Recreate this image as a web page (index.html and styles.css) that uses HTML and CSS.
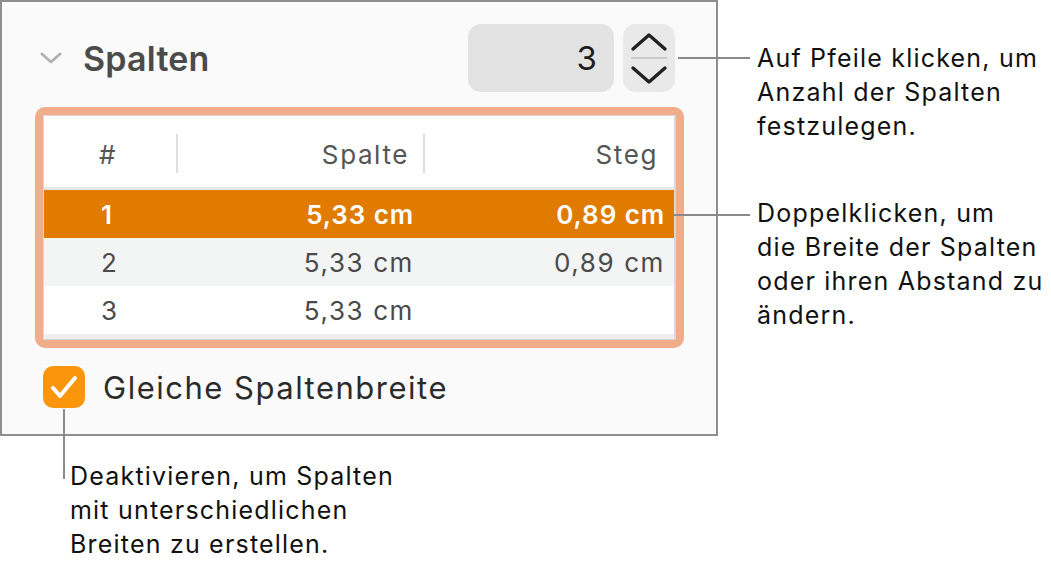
FILE: index.html
```html
<!DOCTYPE html>
<html lang="de">
<head>
<meta charset="UTF-8">
<title>Spalten</title>
<link rel="stylesheet" href="styles.css">
</head>
<body>
<div class="page">
	<section class="panel">
		<div class="panel-head">
			<svg class="disclosure" width="22" height="14" viewBox="0 0 22 14"><polyline points="2,3 11,11 20,3" fill="none" stroke="#b3b3b3" stroke-width="3" stroke-linecap="round" stroke-linejoin="round"/></svg>
			<h2 class="title">Spalten</h2>
			<div class="stepper">
				<div class="stepper-field">3</div>
				<div class="stepper-buttons">
					<svg width="52" height="68" viewBox="0 0 52 68">
						<polyline points="10,25 26,11 42,25" fill="none" stroke="#222" stroke-width="3.4" stroke-linecap="round" stroke-linejoin="round"/>
						<line x1="8" y1="34" x2="44" y2="34" stroke="#cbcbcb" stroke-width="2"/>
						<polyline points="10,44 26,58 42,44" fill="none" stroke="#222" stroke-width="3.4" stroke-linecap="round" stroke-linejoin="round"/>
					</svg>
				</div>
			</div>
		</div>

		<div class="table-frame">
			<div class="col-table">
				<div class="row row-head">
					<span class="cell c-num">#</span>
					<span class="cell c-width">Spalte</span>
					<span class="cell c-gap">Steg</span>
				</div>
				<div class="row row-selected">
					<span class="cell c-num">1</span>
					<span class="cell c-width">5,33 cm</span>
					<span class="cell c-gap">0,89 cm</span>
				</div>
				<div class="row row-alt">
					<span class="cell c-num">2</span>
					<span class="cell c-width">5,33 cm</span>
					<span class="cell c-gap">0,89 cm</span>
				</div>
				<div class="row">
					<span class="cell c-num">3</span>
					<span class="cell c-width">5,33 cm</span>
					<span class="cell c-gap"></span>
				</div>
				<div class="table-foot"></div>
			</div>
		</div>

		<label class="check-row">
			<span class="checkbox">
				<svg width="42" height="42" viewBox="0 0 42 42"><polyline points="10,22 17,30 32,12" fill="none" stroke="#fff" stroke-width="4" stroke-linecap="round" stroke-linejoin="round"/></svg>
			</span>
			<span class="check-label">Gleiche Spaltenbreite</span>
		</label>
	</section>

	<div class="notes">
		<p class="note note-stepper">Auf Pfeile klicken, um<br>Anzahl der Spalten<br>festzulegen.</p>
		<p class="note note-table">Doppelklicken, um<br>die Breite der Spalten<br>oder ihren Abstand zu<br>ändern.</p>
	</div>

	<p class="note note-check">Deaktivieren, um Spalten<br>mit unterschiedlichen<br>Breiten zu erstellen.</p>
</div>
</body>
</html>
```

FILE: styles.css
```css
/* reset */
*{
	margin: 0;
	padding: 0;
	box-sizing: border-box;
}
body{
	background: #fff;
	font-family: Inter, "Noto Sans", "Liberation Sans", sans-serif;
	color: #111;
}
.page{
	width: 1051px;
	height: 564px;
	display: grid;
	grid-template-columns: 718px 1fr;
	grid-template-rows: 436px 1fr;
}

/* inspector panel */
.panel{
	grid-column: 1;
	grid-row: 1;
	background: #fafafa;
	border: 2px solid #8e8e8e;
	padding: 22px 32px 0 33px;
}
.panel-head{
	height: 68px;
	display: flex;
	align-items: center;
}
.disclosure{
	margin-left: 5px;
}
.title{
	margin-left: 21px;
	font-size: 34px;
	font-weight: 600;
	color: #4b4b4b;
	letter-spacing: 0.2px;
}
.stepper{
	margin-left: auto;
	margin-right: 9px;
	display: flex;
	gap: 9px;
}
.stepper-field{
	width: 146px;
	height: 68px;
	border-radius: 13px;
	background: #e3e3e3;
	font-size: 33px;
	color: #1e1e1e;
	display: flex;
	align-items: center;
	justify-content: flex-end;
	padding-right: 17px;
}
.stepper-buttons{
	width: 52px;
	height: 68px;
	border-radius: 13px;
	background: #e9e9e9;
}
.stepper-buttons svg{
	display: block;
}

/* column table */
.table-frame{
	margin-top: 15px;
	border: 8px solid #f1ad8b;
	border-radius: 10px;
}
.col-table{
	background: #fff;
	border: 1px solid #d8d8d8;
	border-right-width: 2px;
	font-size: 26px;
	letter-spacing: 1.6px;
	color: #4a4a4a;
}
.row{
	display: grid;
	grid-template-columns: 132px 247px 1fr;
	height: 48px;
}
.cell{
	display: flex;
	align-items: center;
	justify-content: flex-end;
	padding-right: 9px;
}
.cell.c-num{
	justify-content: flex-start;
	padding-left: 57px;
}
.row-head{
	height: 74px;
	border-bottom: 3px solid #e6e6e6;
	color: #555;
}
.row-head .cell{
	position: relative;
	padding-top: 6px;
	padding-right: 14px;
}
.row-head .c-gap{
	padding-right: 16px;
}
.row-head .c-width::before,
.row-head .c-gap::before{
	content: "";
	position: absolute;
	left: 0;
	top: 18px;
	bottom: 14px;
	border-left: 2px solid #dedede;
}
.row-head .c-num{
	padding-left: 55px;
}
.row-selected{
	background: #e07b00;
	color: #fff;
	font-weight: 600;
	letter-spacing: 0.9px;
}
.row-alt{
	background: #f3f4f4;
}
.table-foot{
	height: 5px;
	background: #efefef;
}

/* checkbox */
.check-row{
	margin-top: 18px;
	display: flex;
	align-items: center;
	gap: 18px;
	padding-left: 8px;
}
.checkbox{
	width: 42px;
	height: 42px;
	border-radius: 10px;
	background: #fb950c;
}
.checkbox svg{
	display: block;
}
.check-label{
	font-size: 31px;
	letter-spacing: 1.5px;
	color: #2b2b2b;
}

/* annotations */
.notes{
	grid-column: 2;
	grid-row: 1;
	padding-left: 39px;
	padding-top: 41px;
}
.note{
	position: relative;
	font-size: 25px;
	letter-spacing: 1.2px;
	line-height: 34px;
	color: #111;
}
.note-table{
	margin-top: 53px;
}
.note::before{
	content: "";
	position: absolute;
	background: #8a8a8a;
}
.note-stepper::before{
	left: -79px;
	top: 16px;
	width: 72px;
	height: 2px;
}
.note-table::before{
	left: -84px;
	top: 18px;
	width: 77px;
	height: 2px;
}
.note-check{
	grid-column: 1;
	grid-row: 2;
	margin-top: 23px;
	margin-left: 70px;
}
.note-check::before{
	left: -7px;
	top: -50px;
	width: 2px;
	height: 70px;
}
```
